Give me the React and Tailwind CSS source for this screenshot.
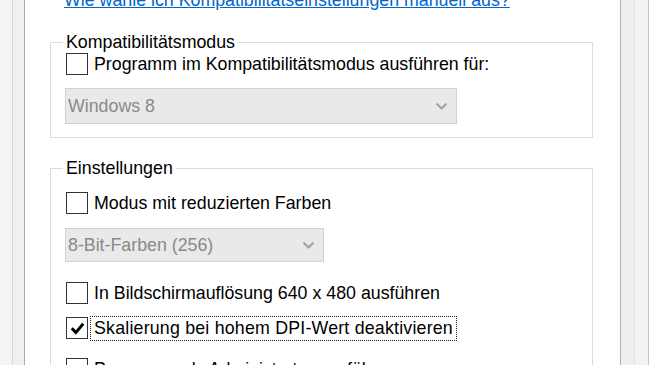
import React from "react";

function Chevron() {
  return (
    <svg width="11" height="7" viewBox="0 0 11 7" className="shrink-0">
      <polyline points="1.2,1.2 5.5,5.5 9.8,1.2" fill="none" stroke="#a3a3a3" strokeWidth="2.2" strokeLinecap="round" strokeLinejoin="round" />
    </svg>
  );
}

function Box({ checked }) {
  return (
    <span className="w-[22px] h-[22px] border border-[#333333] bg-white flex items-center justify-center shrink-0">
      {checked && (
        <svg width="15" height="13" viewBox="0 0 15 13">
          <path d="M1.8 6.3 L5.8 10.6 L13.2 1.8" fill="none" stroke="#000" strokeWidth="3" />
        </svg>
      )}
    </span>
  );
}

function Row({ label, checked, focus, className = "" }) {
  return (
    <div className={"flex items-center h-[22px] " + className}>
      <Box checked={checked} />
      {focus ? (
        <span className="ml-[2px] h-[25px] flex items-center px-[3px] border border-dotted border-[#222] tracking-[0.2px]">{label}</span>
      ) : (
        <span className="ml-[6px]">{label}</span>
      )}
    </div>
  );
}

function Combo({ text, width, height, className = "" }) {
  return (
    <div className={"flex items-center justify-between border border-[#d2d2d2] bg-[#e9e9e9] pl-[2px] pr-[9px] text-[#8a8a8a] " + width + " " + height + " " + className}>
      <span>{text}</span>
      <Chevron />
    </div>
  );
}

export default function App() {
  return (
    <div className="flex h-[365px] overflow-hidden bg-[#f0f0f0] text-[17.8px] text-black font-['Liberation_Sans',Arial,sans-serif] leading-[22px]">
      <div className="flex w-[25px] shrink-0">
        <div className="w-[13px] bg-[#f4f4f4] border-r border-[#d9d9d9]" />
        <div className="flex-1 bg-[#f0f0f0] border-r border-[#a8a8a8]" />
      </div>
      <div className="flex-1 bg-white pl-[25px] flex flex-col">
        <div className="mt-[-10px] ml-[14px] leading-[20px] text-[#0066cc] underline whitespace-nowrap">
          Wie wähle ich Kompatibilitätseinstellungen manuell aus?
        </div>
        <fieldset className="mt-[22px] w-[543px] border border-[#dcdcdc] px-[15px] pb-[13px] pt-0 m-0 shrink-0">
          <legend className="leading-[20px] px-[3px] ml-[-3px]">Kompatibilitätsmodus</legend>
          <Row label="Programm im Kompatibilitätsmodus ausführen für:" className="mt-[1px]" />
          <Combo text="Windows 8" width="w-[392px]" height="h-[36px]" className="mt-[13px] ml-[-1px]" />
        </fieldset>
        <fieldset className="mt-[20px] w-[543px] border border-[#dcdcdc] px-[15px] pb-[13px] pt-0 m-0 shrink-0">
          <legend className="leading-[20px] px-[3px] ml-[-3px]">Einstellungen</legend>
          <Row label="Modus mit reduzierten Farben" className="mt-[14px]" />
          <Combo text="8-Bit-Farben (256)" width="w-[259px]" height="h-[34px]" className="mt-[14px] ml-[-1px]" />
          <Row label="In Bildschirmauflösung 640 x 480 ausführen" className="mt-[20px]" />
          <Row label="Skalierung bei hohem DPI-Wert deaktivieren" checked focus className="mt-[13px]" />
          <Row label="Programm als Administrator ausführen" className="mt-[19px]" />
        </fieldset>
      </div>
      <div className="flex w-[29px] shrink-0 border-l border-[#b0b0b0]">
        <div className="w-[14px] bg-[#efefef] border-r border-[#e0e0e0]" />
        <div className="flex-1 bg-[#f3f3f3] border-r border-[#c4c4c4]" />
      </div>
    </div>
  );
}
